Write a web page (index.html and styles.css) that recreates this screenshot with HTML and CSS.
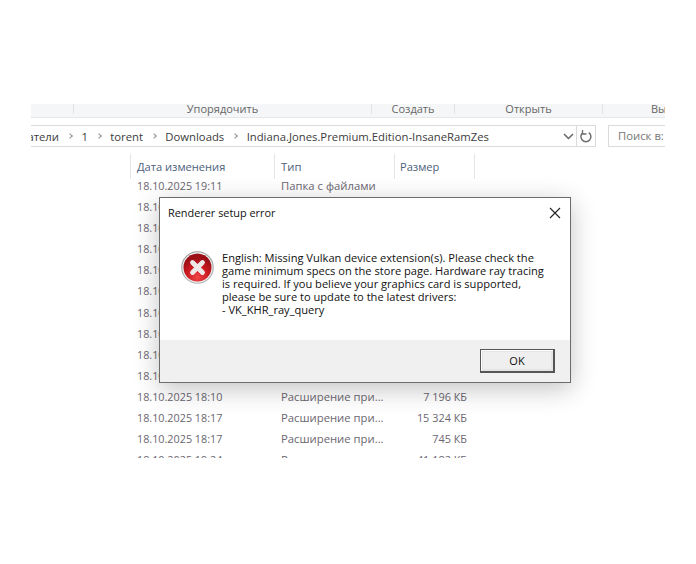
FILE: index.html
```html
<!DOCTYPE html>
<html lang="ru">
<head>
<meta charset="utf-8">
<title>Renderer setup error</title>
<link rel="stylesheet" href="styles.css">
</head>
<body>
<main class="shot">
  <div class="ribbon">
    <div class="group g1"></div>
    <div class="group g2">Упорядочить</div>
    <div class="group g3">Создать</div>
    <div class="group g4">Открыть</div>
    <div class="group g5">Вы</div>
  </div>
  <div class="navbar">
    <div class="address">
      <div class="crumbs">
        <span class="first">ьзователи</span><i class="sep"></i><span>1</span><i class="sep"></i><span>torent</span><i class="sep"></i><span>Downloads</span><i class="sep"></i><span>Indiana.Jones.Premium.Edition-InsaneRamZes</span>
      </div>
      <svg class="chev" width="11" height="7" viewBox="0 0 11 7"><path d="M1 1l4.500 4.500L10 1" fill="none" stroke="#666" stroke-width="1.500"/></svg>
      <div class="refresh">
        <svg width="14" height="15" viewBox="0 0 14 15"><path d="M9.800 3.600A5 5 0 1 1 4 3.600" fill="none" stroke="#6d6d6d" stroke-width="1.500"/><path d="M3.500 1v4h4" fill="none" stroke="#6d6d6d" stroke-width="1.300"/></svg>
      </div>
    </div>
    <div class="search">Поиск в:</div>
  </div>
  <div class="list">
    <div class="row head"><div class="c date">Дата изменения</div><div class="c type">Тип</div><div class="c size">Размер</div></div>
    <div class="row"><div class="c date">18.10.2025 19:11</div><div class="c type">Папка с файлами</div><div class="c size"></div></div>
    <div class="row"><div class="c date">18.10.2025 18:10</div><div class="c type"></div><div class="c size"></div></div>
    <div class="row"><div class="c date">18.10.2025 18:10</div><div class="c type"></div><div class="c size"></div></div>
    <div class="row"><div class="c date">18.10.2025 18:10</div><div class="c type"></div><div class="c size"></div></div>
    <div class="row"><div class="c date">18.10.2025 18:10</div><div class="c type"></div><div class="c size"></div></div>
    <div class="row"><div class="c date">18.10.2025 18:10</div><div class="c type"></div><div class="c size"></div></div>
    <div class="row"><div class="c date">18.10.2025 18:10</div><div class="c type"></div><div class="c size"></div></div>
    <div class="row"><div class="c date">18.10.2025 18:10</div><div class="c type"></div><div class="c size"></div></div>
    <div class="row"><div class="c date">18.10.2025 18:10</div><div class="c type"></div><div class="c size"></div></div>
    <div class="row"><div class="c date">18.10.2025 18:10</div><div class="c type"></div><div class="c size"></div></div>
    <div class="row"><div class="c date">18.10.2025 18:10</div><div class="c type">Расширение при...</div><div class="c size">7 196 КБ</div></div>
    <div class="row"><div class="c date">18.10.2025 18:17</div><div class="c type">Расширение при...</div><div class="c size">15 324 КБ</div></div>
    <div class="row"><div class="c date">18.10.2025 18:17</div><div class="c type">Расширение при...</div><div class="c size">745 КБ</div></div>
    <div class="row"><div class="c date">18.10.2025 19:24</div><div class="c type">Расширение при...</div><div class="c size">41 182 КБ</div></div>
  </div>
  <section class="dialog">
    <header class="titlebar">
      <span>Renderer setup error</span>
      <svg class="close" width="12" height="12" viewBox="0 0 12 12"><path d="M1 1l10 10M11 1 1 11" stroke="#222" stroke-width="1.100" fill="none"/></svg>
    </header>
    <div class="body">
      <svg class="erricon" width="33" height="33" viewBox="0 0 33 33">
        <defs>
          <radialGradient id="red" cx="50%" cy="85%" r="70%"><stop offset="0" stop-color="#f04446"/><stop offset=".6" stop-color="#c8181f"/><stop offset="1" stop-color="#9a1016"/></radialGradient>
          <linearGradient id="ring" x1="0" y1="0" x2="0" y2="1"><stop offset="0" stop-color="#9a9a9a"/><stop offset="1" stop-color="#b5b5b5"/></linearGradient>
        </defs>
        <circle cx="16.500" cy="16.500" r="16.300" fill="url(#ring)"/>
        <circle cx="16.500" cy="16.500" r="15.200" fill="#eee"/>
        <circle cx="16.500" cy="16.500" r="14" fill="url(#red)"/>
        <path d="M11.500 11.500l10 10M21.500 11.500l-10 10" stroke="#efe8e8" stroke-width="4.800" stroke-linecap="round"/>
      </svg>
      <p class="msg">English: Missing Vulkan device extension(s). Please check the<br>game minimum specs on the store page. Hardware ray tracing<br>is required. If you believe your graphics card is supported,<br>please be sure to update to the latest drivers:<br>- VK_KHR_ray_query</p>
    </div>
    <footer class="foot"><button class="ok" type="button">OK</button></footer>
  </section>
</main>
</body>
</html>
```
FILE: styles.css
```css
html, body { margin: 0; padding: 0; background: #fff; }
body { width: 696px; height: 564px; overflow: hidden; font-family: "Open Sans", "Noto Sans", sans-serif; }
.shot { position: relative; width: 634px; height: 354px; margin: 104px 0 0 31px; overflow: hidden; background: #fff; color: #5f5a66; font-size: 11.300px; }

.ribbon { display: flex; height: 13px; background: #f5f6f7; border-bottom: 1px solid #e6e7e8; line-height: 10px; font-size: 11px; color: #666; }
.group { border-right: 1px solid #e2e3e4; text-align: center; height: 10px; white-space: nowrap; }
.g1 { width: 42px; }
.g2 { width: 297px; }
.g3 { width: 82px; }
.g4 { width: 147px; }
.g5 { border: 0; flex: 1; text-align: left; padding-left: 48px; overflow: hidden; }

.navbar { display: flex; margin-top: 7px; height: 22px; }
.address { box-sizing: border-box; width: 565px; display: flex; align-items: center; border: 1px solid #dadbdc; border-left: 0; color: #3c3c3c; }
.crumbs { flex: 1; display: flex; align-items: center; gap: 9.200px; white-space: nowrap; overflow: hidden; }
.first { margin-left: -29px; }
.sep { flex: none; width: 3px; height: 3px; border-top: 1.500px solid #909090; border-right: 1.500px solid #909090; transform: rotate(45deg); }
.chev { margin-right: 2px; }
.refresh { width: 18px; height: 20px; border-left: 1px solid #dadbdc; display: flex; align-items: center; justify-content: center; }
.search { box-sizing: border-box; margin-left: 12px; flex: 1; border: 1px solid #dadbdc; border-right: 0; padding-left: 9px; line-height: 20px; color: #777; white-space: nowrap; overflow: hidden; }

.list { margin: 7px 0 0 99px; }
.row { display: flex; height: 21.100px; line-height: 21px; }
.head { height: 25px; line-height: 26px; color: #4c607a; margin-bottom: -4px; }
.c { box-sizing: border-box; white-space: nowrap; overflow: hidden; }
.date { width: 144px; padding-left: 7px; font-size: 10.800px; }
.head .date { font-size: 11.100px; padding-left: 6px; }
.type { width: 120px; padding-left: 7px; }
.size { width: 81px; padding-right: 8px; text-align: right; font-size: 10.900px; }
.head .c { border-left: 1px solid #e5e5e5; }
.head .type { padding-left: 6px; }
.head .size { width: 81px; border-right: 1px solid #e5e5e5; text-align: left; padding-left: 5px; font-size: 11.100px; }
.row:not(.head) { color: #6b6670; }

.dialog { position: absolute; left: 128px; top: 93px; width: 412px; height: 186px; box-sizing: border-box; display: flex; flex-direction: column; background: #fff; border: 1px solid #6c6c6c; box-shadow: 0 6px 24px rgba(0,0,0,.24); color: #111; }
.titlebar { height: 29px; display: flex; justify-content: space-between; align-items: center; padding: 0 9px 0 8px; font-size: 10.900px; color: #111; }
.body { flex: 1; display: flex; align-items: flex-start; padding: 23px 0 0 21px; }
.erricon { margin-top: 1px; flex: none; }
.msg { margin: 1px 0 0 8px; font-size: 11.100px; line-height: 13px; white-space: nowrap; color: #111; }
.foot { height: 42px; background: #f0f0f0; display: flex; justify-content: flex-end; padding: 9px 15px 0 0; box-sizing: border-box; }
.ok { box-sizing: border-box; width: 75px; height: 24px; padding: 0; background: #efefef; border: 1px solid #555; border-right-width: 2px; border-bottom-width: 2px; box-shadow: inset 1px 1px 0 #fff, inset 0 0 0 2px #e4e4e4; font: 11px "Open Sans", "Noto Sans", sans-serif; color: #111; }
```
